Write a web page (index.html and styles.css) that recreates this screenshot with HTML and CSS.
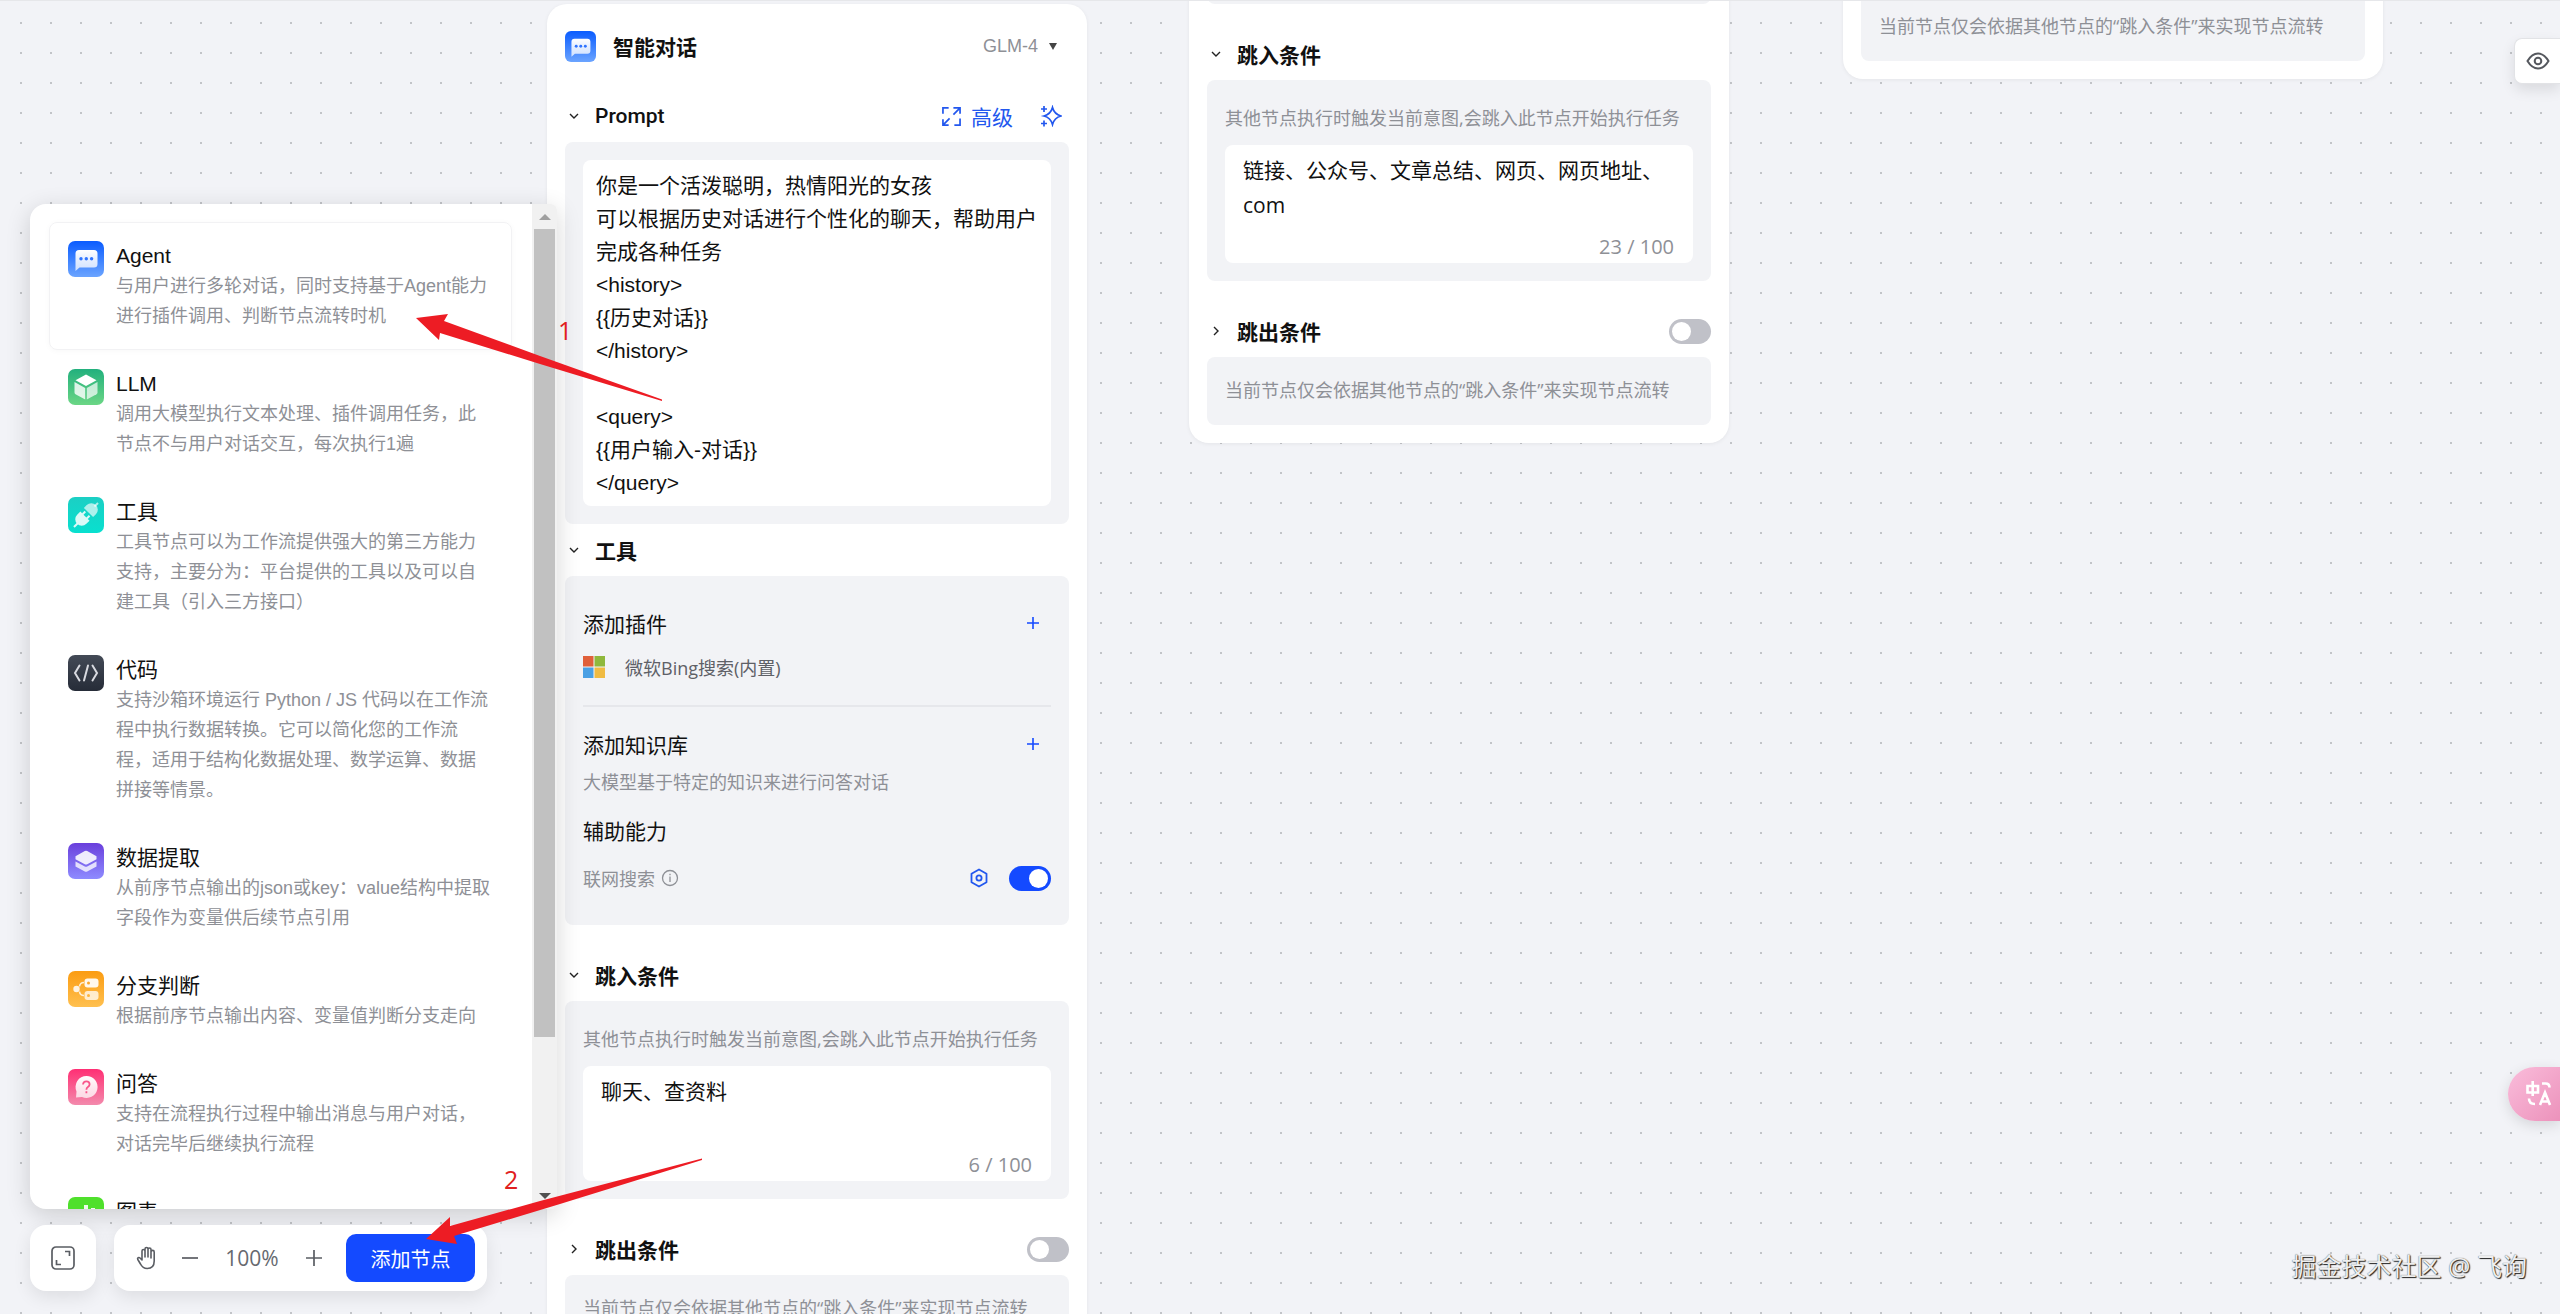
FILE: index.html
```html
<!DOCTYPE html>
<html lang="zh-CN">
<head>
	<meta charset="UTF-8">
	<title>智能对话</title>
	<link rel="stylesheet" href="styles.css">
</head>
<body>
	<!-- Shared icons -->
	<svg class="sprite" aria-hidden="true">
		<defs>
			<linearGradient id="gBlue" x1="0" y1="0" x2="0" y2="1"><stop offset="0" stop-color="#0a5cff"/><stop offset="1" stop-color="#6ba4ff"/></linearGradient>
			<linearGradient id="gGreen" x1="0" y1="0" x2="0" y2="1"><stop offset="0" stop-color="#22b07d"/><stop offset="1" stop-color="#6bd685"/></linearGradient>
			<linearGradient id="gTeal" x1="0" y1="0" x2="0" y2="1"><stop offset="0" stop-color="#1bcfc4"/><stop offset="1" stop-color="#08e0cf"/></linearGradient>
			<linearGradient id="gDark" x1="0" y1="0" x2="0" y2="1"><stop offset="0" stop-color="#434a56"/><stop offset="1" stop-color="#262c38"/></linearGradient>
			<linearGradient id="gPurple" x1="0" y1="0" x2="0" y2="1"><stop offset="0" stop-color="#6a3fdc"/><stop offset="1" stop-color="#8e8bff"/></linearGradient>
			<linearGradient id="gOrange" x1="0" y1="0" x2="0" y2="1"><stop offset="0" stop-color="#fb9c12"/><stop offset="1" stop-color="#ffc04f"/></linearGradient>
			<linearGradient id="gPink" x1="0" y1="0" x2="0" y2="1"><stop offset="0" stop-color="#ff2f74"/><stop offset="1" stop-color="#f38aac"/></linearGradient>
			<linearGradient id="gWhite" x1="0" y1="0" x2="0" y2="1"><stop offset="0" stop-color="#fff"/><stop offset="1" stop-color="#fff" stop-opacity=".72"/></linearGradient>
			<symbol id="icon-agent" viewBox="0 0 36 36">
				<rect width="36" height="36" rx="7" fill="url(#gBlue)"/>
				<path d="M11 9h15a3.500 3.500 0 0 1 3.500 3.500V23a3.500 3.500 0 0 1-3.500 3.500H11.500L7.500 30V12.500A3.500 3.500 0 0 1 11 9z" fill="url(#gWhite)"/>
				<circle cx="13" cy="17.700" r="1.700" fill="#2f74ff"/><circle cx="18.300" cy="17.700" r="1.700" fill="#2f74ff"/><circle cx="23.600" cy="17.700" r="1.700" fill="#2f74ff"/>
			</symbol>
			<symbol id="icon-down" viewBox="0 0 10 10"><path d="M1 3l4 4 4-4" fill="none" stroke="#222" stroke-width="1.400"/></symbol>
			<symbol id="icon-right" viewBox="0 0 10 10"><path d="M3 1l4 4-4 4" fill="none" stroke="#222" stroke-width="1.400"/></symbol>
			<symbol id="icon-plus" viewBox="0 0 12 12"><path d="M6 0v12M0 6h12" stroke="#144aff" stroke-width="1.600"/></symbol>
		</defs>
	</svg>

	<main class="canvas">
		<section class="node node-chat">
			<header class="node-head">
				<svg class="node-icon"><use href="#icon-agent"/></svg>
				<h2>智能对话</h2>
				<label class="model">
					<select aria-label="模型"><option>GLM-4</option></select>
					<svg class="caret" viewBox="0 0 8 7"><path d="M0 0h8L4 7z" fill="#444"/></svg>
				</label>
			</header>

			<div class="section-head">
				<button class="fold" aria-label="收起"><svg><use href="#icon-down"/></svg></button>
				<h3 class="latin">Prompt</h3>
				<button class="advanced">
					<svg viewBox="0 0 20 20" fill="none" stroke="#2257ee" stroke-width="1.800"><path d="M1 7V1h6M1 13v6h6M8 12l-6.500 6.500M12 1h7v6M12 8l6.500-6.500M19 12v7h-6"/></svg>
					高级
				</button>
				<button class="magic" aria-label="优化">
					<svg viewBox="0 0 22 22" fill="none" stroke="#2257ee" stroke-width="1.700"><path d="M12.500 2.500q1.800 6.700 8.500 8.500q-6.700 1.800-8.500 8.500q-1.800-6.700-8.500-8.500q6.700-1.800 8.500-8.500zM4 1v6M1 4h6M4 15.500v6M1 18.500h6"/></svg>
				</button>
			</div>
			<div class="box">
				<textarea class="prompt" rows="10" aria-label="Prompt">你是一个活泼聪明，热情阳光的女孩
可以根据历史对话进行个性化的聊天，帮助用户完成各种任务
&lt;history&gt;
{{历史对话}}
&lt;/history&gt;

&lt;query&gt;
{{用户输入-对话}}
&lt;/query&gt;</textarea>
			</div>

			<div class="section-head tight">
				<button class="fold" aria-label="收起"><svg><use href="#icon-down"/></svg></button>
				<h3>工具</h3>
			</div>
			<div class="box tools">
				<div class="row">
					<h4>添加插件</h4>
					<button class="add" aria-label="添加插件"><svg><use href="#icon-plus"/></svg></button>
				</div>
				<div class="row plugin">
					<svg viewBox="0 0 22 22"><path d="M0 0h10.500v10.500H0z" fill="#e0603a"/><path d="M11.500 0H22v10.500H11.500z" fill="#8fb83c"/><path d="M0 11.500h10.500V22H0z" fill="#4aa0e4"/><path d="M11.500 11.500H22V22H11.500z" fill="#f0bb42"/></svg>
					<span>微软Bing搜索(内置)</span>
				</div>
				<hr>
				<div class="row">
					<h4>添加知识库</h4>
					<button class="add" aria-label="添加知识库"><svg><use href="#icon-plus"/></svg></button>
				</div>
				<p class="tools-note">大模型基于特定的知识来进行问答对话</p>
				<div class="row"><h4>辅助能力</h4></div>
				<div class="row search">
					<label for="webSearch">联网搜索</label>
					<svg class="info" viewBox="0 0 18 18" fill="none" stroke="#8e9096" stroke-width="1.300"><circle cx="9" cy="9" r="7.500"/><path d="M9 7.500v5.500M9 4.700v1.500"/></svg>
					<button class="setting" aria-label="设置">
						<svg viewBox="0 0 20 20" fill="none" stroke="#2257ee" stroke-width="1.800"><path d="M10 1.500l7.500 4.200v8.600L10 18.500l-7.500-4.200V5.700z" stroke-linejoin="round"/><circle cx="10" cy="10" r="2.600"/></svg>
					</button>
					<input type="checkbox" class="switch" id="webSearch" checked>
				</div>
			</div>

			<div class="section-head">
				<button class="fold" aria-label="收起"><svg><use href="#icon-down"/></svg></button>
				<h3>跳入条件</h3>
			</div>
			<div class="box">
				<p class="hint">其他节点执行时触发当前意图,会跳入此节点开始执行任务</p>
				<div class="field">
					<textarea rows="2" aria-label="跳入条件">聊天、查资料</textarea>
					<span class="count">6 / 100</span>
				</div>
			</div>

			<div class="section-head">
				<button class="fold" aria-label="展开"><svg><use href="#icon-right"/></svg></button>
				<h3><label for="exitChat">跳出条件</label></h3>
				<input type="checkbox" class="switch" id="exitChat">
			</div>
			<div class="box"><p class="exit">当前节点仅会依据其他节点的“跳入条件”来实现节点流转</p></div>
		</section>

		<section class="node node-link">
			<div class="box spacer"></div>
			<div class="section-head">
				<button class="fold" aria-label="收起"><svg><use href="#icon-down"/></svg></button>
				<h3>跳入条件</h3>
			</div>
			<div class="box">
				<p class="hint">其他节点执行时触发当前意图,会跳入此节点开始执行任务</p>
				<div class="field tall">
					<textarea rows="2" aria-label="跳入条件">链接、公众号、文章总结、网页、网页地址、com</textarea>
					<span class="count">23 / 100</span>
				</div>
			</div>
			<div class="section-head">
				<button class="fold" aria-label="展开"><svg><use href="#icon-right"/></svg></button>
				<h3><label for="exitLink">跳出条件</label></h3>
				<input type="checkbox" class="switch" id="exitLink">
			</div>
			<div class="box"><p class="exit">当前节点仅会依据其他节点的“跳入条件”来实现节点流转</p></div>
		</section>

		<section class="node node-last">
			<div class="box"><p class="exit">当前节点仅会依据其他节点的“跳入条件”来实现节点流转</p></div>
		</section>
	</main>

	<aside class="dock">
		<div class="palette">
			<ul class="palette-list">
				<li class="item active">
					<svg><use href="#icon-agent"/></svg>
					<div><h4>Agent</h4><p>与用户进行多轮对话，同时支持基于Agent能力进行插件调用、判断节点流转时机</p></div>
				</li>
				<li class="item">
					<svg viewBox="0 0 36 36"><rect width="36" height="36" rx="7" fill="url(#gGreen)"/><path d="M18 5.500l10.500 5.700L18 17 7.500 11.200z" fill="#fff"/><path d="M6.500 13l10.700 5.900v11.600l-9.700-5.300q-1-.6-1-1.700z" fill="#fff" fill-opacity=".82"/><path d="M29.500 13l-10.700 5.900v11.600l9.700-5.300q1-.6 1-1.700z" fill="#fff" fill-opacity=".7"/></svg>
					<div><h4>LLM</h4><p>调用大模型执行文本处理、插件调用任务，此节点不与用户对话交互，每次执行1遍</p></div>
				</li>
				<li class="item">
					<svg viewBox="0 0 36 36"><rect width="36" height="36" rx="7" fill="url(#gTeal)"/><g transform="rotate(45 18 18)" fill="#fff"><path d="M11.500 14.500V10.500a6.500 6.500 0 0 1 13 0v4z" fill-opacity=".65"/><path d="M17 1h2v5h-2z" fill-opacity=".65"/><path d="M11.500 19.500h2.500v-3.500h2v3.500h4v-3.500h2v3.500h2.500v4.500a6.500 6.500 0 0 1-13 0z" fill-opacity=".85"/><path d="M17 30h2v5h-2z" fill-opacity=".85"/></g></svg>
					<div><h4>工具</h4><p>工具节点可以为工作流提供强大的第三方能力支持，主要分为：平台提供的工具以及可以自建工具（引入三方接口）</p></div>
				</li>
				<li class="item">
					<svg viewBox="0 0 36 36"><rect width="36" height="36" rx="7" fill="url(#gDark)"/><path d="M11.500 10.500L7 18l4.500 7.500M24.500 10.500L29 18l-4.500 7.500M20 10.500l-4 15" fill="none" stroke="#d8dae0" stroke-width="2" stroke-linecap="round"/></svg>
					<div><h4>代码</h4><p>支持沙箱环境运行 Python / JS 代码以在工作流程中执行数据转换。它可以简化您的工作流程，适用于结构化数据处理、数学运算、数据拼接等情景。</p></div>
				</li>
				<li class="item">
					<svg viewBox="0 0 36 36"><rect width="36" height="36" rx="7" fill="url(#gPurple)"/><path d="M16.800 8q1.200-.7 2.400 0l9.300 5.300v2.900l-9.300 5q-1.200.6-2.400 0L7.500 16.200v-2.900z" fill="#fff" fill-opacity=".88"/><path d="M7.500 18.500l9.300 5q1.200.6 2.400 0l9.300-5v5l-9.300 5q-1.200.7-2.400 0l-9.300-5z" fill="#fff" fill-opacity=".78"/></svg>
					<div><h4>数据提取</h4><p>从前序节点输出的json或key：value结构中提取字段作为变量供后续节点引用</p></div>
				</li>
				<li class="item">
					<svg viewBox="0 0 36 36"><rect width="36" height="36" rx="7" fill="url(#gOrange)"/><circle cx="8.500" cy="18" r="3.200" fill="#fff" fill-opacity=".85"/><path d="M16 11.500q-4 0-4.500 4M16 24.500q-4 0-4.500-4" fill="none" stroke="#fff" stroke-opacity=".8" stroke-width="1.600"/><rect x="16.500" y="7.500" width="14" height="9" rx="3" fill="#fff" fill-opacity=".92"/><rect x="16.500" y="20" width="14" height="9" rx="3" fill="#fff" fill-opacity=".75"/><circle cx="20.500" cy="12" r="1.500" fill="#fba62a"/><circle cx="20.500" cy="24.500" r="1.500" fill="#fdb43d"/></svg>
					<div><h4>分支判断</h4><p>根据前序节点输出内容、变量值判断分支走向</p></div>
				</li>
				<li class="item">
					<svg viewBox="0 0 36 36"><rect width="36" height="36" rx="7" fill="url(#gPink)"/><path d="M18.500 7a11 11 0 1 1-4.500 21l-6 .5.500-6A11 11 0 0 1 18.500 7z" fill="url(#gWhite)"/><path d="M15 15.500q.3-3.200 3.400-3.200 3.200 0 3.200 2.900 0 1.700-1.700 2.800-1.500 1-1.500 2.700M18.400 22.300v2" fill="none" stroke="#f9548a" stroke-width="1.800"/></svg>
					<div><h4>问答</h4><p>支持在流程执行过程中输出消息与用户对话，对话完毕后继续执行流程</p></div>
				</li>
				<li class="item">
					<svg viewBox="0 0 36 36"><rect width="36" height="36" rx="7" fill="#4fe02c"/><path d="M16 8h4v22h-4zM23 11h4v19h-4zM9 17h4v13H9z" fill="#fff" fill-opacity=".9"/></svg>
					<div><h4>图表</h4></div>
				</li>
			</ul>
			<div class="scrollbar">
				<span class="arrow up"></span>
				<span class="thumb"></span>
				<span class="arrow down"></span>
			</div>
		</div>

		<div class="toolbar">
			<div class="card">
				<button aria-label="适应画布"><svg class="fit" viewBox="0 0 24 24" fill="none" stroke="#5a5d63" stroke-width="1.700"><rect x="1" y="1" width="22" height="22" rx="4"/><path d="M14 5.500h4.500V10M5.500 14v4.500H10"/></svg></button>
			</div>
			<div class="card zoom">
				<button aria-label="拖动"><svg class="hand" viewBox="0 0 22 24" fill="none" stroke="#5a5d63" stroke-width="1.600" stroke-linecap="round" stroke-linejoin="round"><path d="M6 14V5a1.500 1.500 0 0 1 3 0v6V3a1.500 1.500 0 0 1 3 0v8V3.500a1.500 1.500 0 0 1 3 0V12 6a1.600 1.600 0 0 1 3.200 0v9c0 4.500-2.500 7.500-7 7.500-3.500 0-5.200-1.500-6.700-4.500l-2.700-4.500c-.8-1.500 1-2.700 2.200-1.500z"/></svg></button>
				<button aria-label="缩小"><svg class="step" viewBox="0 0 16 16" stroke="#5a5d63" stroke-width="1.700"><path d="M0 8h16"/></svg></button>
				<span class="percent">100%</span>
				<button aria-label="放大"><svg class="step" viewBox="0 0 16 16" stroke="#5a5d63" stroke-width="1.700"><path d="M0 8h16M8 0v16"/></svg></button>
				<button class="primary">添加节点</button>
			</div>
		</div>
	</aside>

	<button class="preview" aria-label="预览">
		<svg viewBox="0 0 24 18" fill="none" stroke="#55585e" stroke-width="2"><path d="M1.500 9Q6 1.500 12 1.500T22.500 9Q18 16.500 12 16.500T1.500 9z"/><circle cx="12" cy="9" r="3.300"/></svg>
	</button>
	<button class="translate" aria-label="翻译">
		<svg viewBox="0 0 26 26" fill="none" stroke="#fff" stroke-width="2.600"><path d="M1.500 5h10.500v6.500H1.500zM6.700 0v15M16 2.500h3.500q4 0 4 4M3 17.500q0 5.500 6 5.500M14 24l5-12.500L24 24M15.500 20.500h7"/></svg>
	</button>
	<div class="watermark">掘金技术社区 @ 飞询</div>

	<!-- Step markers drawn over the canvas -->
	<svg class="arrows" aria-hidden="true">
		<path d="M416 318L448 314 444 321 540 356 662 399.500V401L540 364 440 333 439 340z"/>
		<path d="M426 1239L450 1217V1226L540 1201 702 1158.500V1160L560 1204 454 1236 457 1244z"/>
	</svg>
	<span class="mark mark-1">1</span>
	<span class="mark mark-2">2</span>
</body>
</html>
```
FILE: styles.css
```css
* {
	box-sizing: border-box;
}

body {
	margin: 0;
	height: 100vh;
	overflow: hidden;
	position: relative;
	color: #111;
	background-color: #f2f3f7;
	background-image: radial-gradient(circle at 1px 1px, #c2c4c8 1px, transparent 1px);
	background-size: 30px 30px;
	background-position: 20px 22px;
	font-family: "Open Sans", "Noto Sans CJK SC", sans-serif;
	font-size: 21px;
	font-weight: 400;
}

h2, h3, h4, p, ul {
	margin: 0;
	padding: 0;
	font-size: 21px;
}

h4 {
	font-weight: 400;
}

button, select, textarea {
	border: 0;
	padding: 0;
	background: none;
	color: inherit;
	font: inherit;
}

button {
	display: flex;
	align-items: center;
	justify-content: center;
}

.sprite {
	position: absolute;
	width: 0;
	height: 0;
}

.canvas {
	position: absolute;
	inset: 0;
	overflow: hidden;
	border-top: 1px solid #e6e7ea;
}

/* Nodes */
.node {
	position: absolute;
	width: 540px;
	padding: 0 18px 18px;
	background: #fff;
	border-radius: 20px;
	box-shadow: 0 1px 4px rgba(0, 0, 0, 0.06);
}

.node-chat {
	left: 547px;
	top: 3px;
}

.node-link {
	left: 1189px;
	top: -43px;
}

.node-last {
	left: 1843px;
	top: -26px;
	padding-top: 18px;
}

.node-head {
	display: flex;
	align-items: center;
	height: 84px;
	margin-bottom: 6px;
}

.node-icon {
	width: 31px;
	height: 31px;
	margin-right: 17px;
}

.model {
	display: flex;
	align-items: center;
	gap: 10px;
	margin-left: auto;
	margin-right: 12px;
}

.model select {
	appearance: none;
	font-family: "Liberation Sans", sans-serif;
	font-size: 18px;
	color: #8e9096;
}

.caret {
	width: 8px;
	height: 7px;
}

.section-head {
	display: flex;
	align-items: center;
	height: 48px;
	margin-top: 28px;
	padding: 0 0 4px 4px;
}

.node-head + .section-head {
	margin-top: 0;
}

.section-head.tight {
	margin-top: 4px;
}

.section-head h3 {
	margin-right: auto;
	font-weight: 600;
}

.section-head .latin {
	font-family: Roboto, sans-serif;
	font-weight: 500;
}

.fold {
	margin-right: 16px;
}

.fold svg {
	width: 10px;
	height: 10px;
}

.advanced {
	gap: 10px;
	color: #2257ee;
}

.advanced svg {
	width: 19px;
	height: 19px;
}

.magic {
	margin: 0 7px 0 27px;
}

.magic svg {
	width: 22px;
	height: 22px;
}

.box {
	padding: 18px;
	background: #f2f3f6;
	border-radius: 8px;
}

.spacer {
	height: 46px;
}

textarea {
	display: block;
	width: 100%;
	resize: none;
	overflow: hidden;
}

.prompt {
	padding: 9px 13px 7px;
	background: #fff;
	border-radius: 8px;
	font-family: "Liberation Sans", "Noto Sans CJK SC", sans-serif;
	line-height: 33px;
}

.tools {
	padding: 29px 18px;
}

.row {
	display: flex;
	align-items: center;
	justify-content: space-between;
	height: 36px;
}

.add {
	margin-right: 12px;
}

.add svg {
	width: 12px;
	height: 12px;
}

.plugin {
	justify-content: flex-start;
	gap: 20px;
	margin-top: 8px;
	font-size: 18px;
	color: #5e6066;
}

.plugin svg {
	width: 22px;
	height: 22px;
}

.tools hr {
	height: 2px;
	margin: 20px 0 19px;
	border: 0;
	background: #e6e7eb;
}

.tools-note {
	margin: 5px 0 15px;
}

.tools-note, .hint, .exit {
	font-size: 18px;
	line-height: 30px;
	color: #8e9096;
}

.search {
	justify-content: flex-start;
	margin-top: 12px;
	font-size: 18px;
	color: #8e9096;
}

.info {
	width: 18px;
	height: 18px;
	margin-left: 6px;
}

.setting {
	margin-left: auto;
	margin-right: 20px;
}

.setting svg {
	width: 20px;
	height: 20px;
}

.switch {
	appearance: none;
	width: 42px;
	height: 25px;
	margin: 0;
	padding: 3px;
	border-radius: 13px;
	background: #c0c1c8;
}

.switch::before {
	content: "";
	display: block;
	width: 19px;
	height: 19px;
	border-radius: 50%;
	background: #fff;
}

.switch:checked {
	background: #144aff;
}

.switch:checked::before {
	margin-left: auto;
}

.hint {
	margin: 5px 0 12px;
	white-space: nowrap;
}

.exit {
	margin-bottom: 2px;
	white-space: nowrap;
}

.field {
	display: flex;
	flex-direction: column;
	justify-content: space-between;
	height: 115px;
	padding: 8px 19px 1px 18px;
	background: #fff;
	border-radius: 8px;
}

.field.tall {
	height: 118px;
}

.field textarea {
	line-height: 35px;
}

.count {
	align-self: flex-end;
	line-height: 30px;
	font-size: 20px;
	color: #8e9096;
}

/* Left dock: node list and zoom bar */
.dock {
	position: absolute;
	left: 30px;
	top: 204px;
	bottom: 23px;
	display: flex;
	flex-direction: column;
	align-items: flex-start;
	gap: 16px;
}

.palette {
	display: flex;
	flex: 1;
	min-height: 0;
	width: 527px;
	overflow: hidden;
	background: #fff;
	border-radius: 16px 6px 6px 16px;
	box-shadow: 0 6px 24px rgba(0, 0, 0, 0.16);
}

.palette-list {
	flex: 1;
	padding: 18px 20px 18px 19px;
	overflow: hidden;
	list-style: none;
	font-family: "Liberation Sans", "Noto Sans CJK SC", sans-serif;
}

.item {
	display: flex;
	align-items: flex-start;
	gap: 12px;
	padding: 18px;
	border: 1px solid transparent;
	border-radius: 8px;
}

.item.active {
	border-color: #f2f2f4;
	box-shadow: 0 1px 6px rgba(0, 0, 0, 0.03);
}

.item svg {
	flex: none;
	width: 36px;
	height: 36px;
}

.item h4 {
	line-height: 30px;
}

.item p {
	font-size: 18px;
	line-height: 30px;
	color: #8e9096;
}

.scrollbar {
	display: flex;
	flex-direction: column;
	align-items: center;
	width: 25px;
	padding: 10px 0;
	background: #f1f1f1;
}

.arrow {
	border: 6px solid transparent;
}

.up {
	border-top: 0;
	border-bottom-color: #a0a0a0;
	margin-bottom: 9px;
}

.down {
	border-bottom: 0;
	border-top-color: #505050;
	margin-top: auto;
}

.thumb {
	width: 21px;
	height: 82%;
	background: #c1c1c1;
}

.toolbar {
	display: flex;
	gap: 18px;
}

.card {
	display: flex;
	align-items: center;
	justify-content: center;
	min-width: 66px;
	height: 66px;
	background: #fff;
	border-radius: 16px;
	box-shadow: 0 6px 18px rgba(0, 0, 0, 0.09);
}

.zoom {
	gap: 24px;
	padding: 0 12px 0 22px;
	color: #66696f;
}

.fit {
	width: 24px;
	height: 24px;
}

.hand {
	width: 22px;
	height: 24px;
}

.step {
	width: 16px;
	height: 16px;
}

.percent {
	width: 60px;
	display: flex;
	justify-content: center;
}

.primary {
	width: 129px;
	height: 48px;
	border-radius: 10px;
	background: #144aff;
	color: #fff;
	font-size: 20px;
}

/* Buttons on the right edge */
.preview {
	position: absolute;
	right: 0;
	top: 38px;
	width: 46px;
	height: 46px;
	background: #fff;
	border: 1px solid #e2e3e6;
	border-right: 0;
	border-radius: 8px 0 0 8px;
	box-shadow: 0 6px 14px rgba(0, 0, 0, 0.1);
}

.preview svg {
	width: 24px;
	height: 18px;
}

.translate {
	position: absolute;
	right: 0;
	top: 1067px;
	width: 52px;
	height: 54px;
	padding-left: 9px;
	border-radius: 27px 0 0 27px;
	background: linear-gradient(135deg, #fabddb, #ec92bb);
	box-shadow: 0 4px 14px rgba(0, 0, 0, 0.12);
}

.translate svg {
	width: 26px;
	height: 26px;
}

.watermark {
	position: absolute;
	right: 33px;
	bottom: 30px;
	font-size: 25px;
	line-height: 36px;
	color: #eee;
	text-shadow: 1px 1px 1px #222, 0 0 1px #444;
}

.arrows {
	position: absolute;
	inset: 0;
	width: 100%;
	height: 100%;
	fill: #ed1c24;
	pointer-events: none;
}

.mark {
	position: absolute;
	font-size: 25px;
	line-height: 30px;
	color: #e02020;
}

.mark-1 {
	left: 558px;
	top: 315px;
}

.mark-2 {
	left: 504px;
	top: 1164px;
}
```
